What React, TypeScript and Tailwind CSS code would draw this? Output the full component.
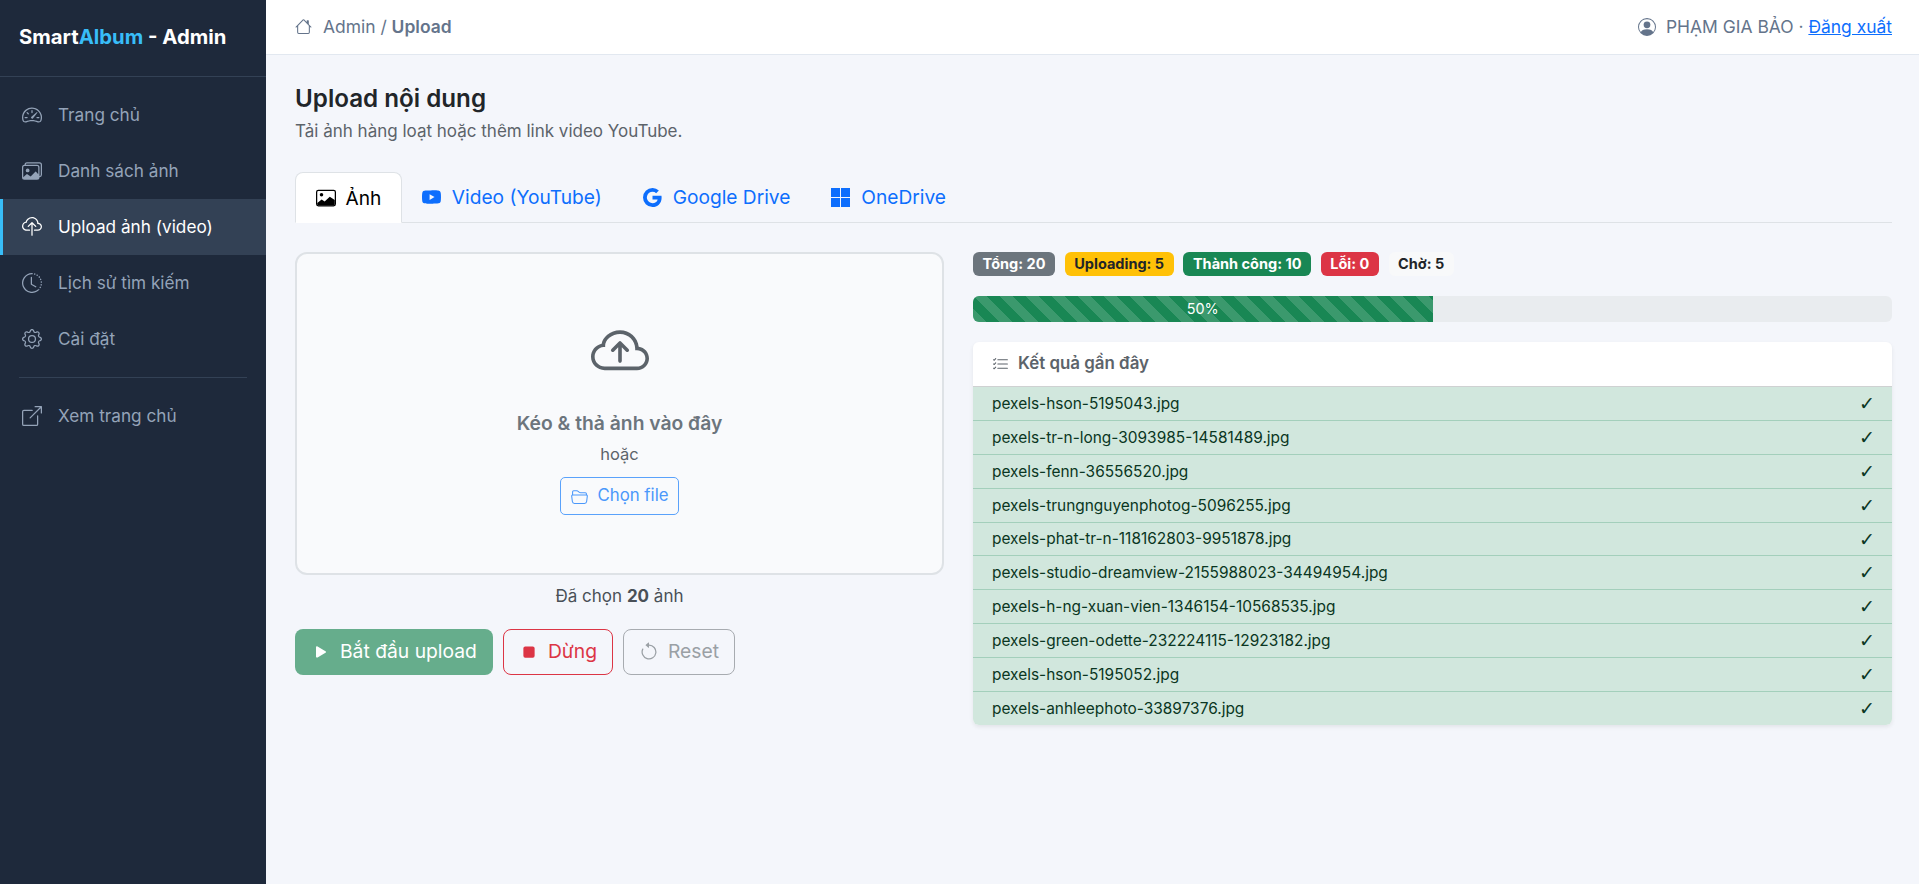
import React from 'react';
import {
  BsArrowCounterclockwise,
  BsBoxArrowUpRight,
  BsClockHistory,
  BsCloudArrowUp,
  BsCloudUpload,
  BsFolder2Open,
  BsGear,
  BsGoogle,
  BsHouse,
  BsImages,
  BsListCheck,
  BsPersonCircle,
  BsPlayFill,
  BsSpeedometer2,
  BsStopFill,
  BsYoutube,
} from 'react-icons/bs';

const files = [
  'pexels-hson-5195043.jpg',
  'pexels-tr-n-long-3093985-14581489.jpg',
  'pexels-fenn-36556520.jpg',
  'pexels-trungnguyenphotog-5096255.jpg',
  'pexels-phat-tr-n-118162803-9951878.jpg',
  'pexels-studio-dreamview-2155988023-34494954.jpg',
  'pexels-h-ng-xuan-vien-1346154-10568535.jpg',
  'pexels-green-odette-232224115-12923182.jpg',
  'pexels-hson-5195052.jpg',
  'pexels-anhleephoto-33897376.jpg',
];

const PhotoIcon = () => (
  <svg viewBox="0 0 16 16" className="size-5" fill="currentColor">
    <rect x="0.5" y="1.8" width="15" height="12.4" rx="1.4" fill="none" stroke="currentColor" />
    <circle cx="4.4" cy="5.4" r="1.4" />
    <path d="M1 12 4.5 9.2l2.4 1.5L11 7l4 2.6V13a1 1 0 0 1-1 1H2a1 1 0 0 1-1-1z" />
  </svg>
);

const WindowsIcon = () => (
  <svg viewBox="0 0 19 19" className="size-[19px]" fill="currentColor">
    <rect x="0" y="0" width="9" height="9" />
    <rect x="10" y="0" width="9" height="9" />
    <rect x="0" y="10" width="9" height="9" />
    <rect x="10" y="10" width="9" height="9" />
  </svg>
);

const NavItem = ({ icon, label, active }: { icon: React.ReactNode; label: string; active?: boolean }) => (
  <a
    className={
      active
        ? 'flex h-14 items-center gap-[16px] border-l-[3px] border-[#38bdf8] bg-[#334155] pl-[19px] text-white'
        : 'flex h-14 items-center gap-[16px] border-l-[3px] border-transparent pl-[19px] text-[#94a3b8]'
    }
  >
    <span className="text-[20px]">{icon}</span>
    <span>{label}</span>
  </a>
);

const Sidebar = () => (
  <aside className="flex w-[266px] shrink-0 flex-col bg-[#1e293b] text-[17.2px]">
    <div className="flex h-[77px] items-center border-b border-[#334155] pb-[2px] pl-[19px] text-[20.3px] font-bold text-white">
      Smart<span className="text-[#38bdf8]">Album</span>&nbsp;- Admin
    </div>
    <nav className="pt-[10px]">
      <NavItem icon={<BsSpeedometer2 />} label="Trang chủ" />
      <NavItem icon={<BsImages />} label="Danh sách ảnh" />
      <NavItem icon={<BsCloudUpload />} label="Upload ảnh (video)" active />
      <NavItem icon={<BsClockHistory />} label="Lịch sử tìm kiếm" />
      <NavItem icon={<BsGear />} label="Cài đặt" />
      <div className="mx-[19px] my-[10px] border-t border-[#334155]" />
      <NavItem icon={<BsBoxArrowUpRight />} label="Xem trang chủ" />
    </nav>
  </aside>
);

const Topbar = () => (
  <header className="flex h-[55px] items-center justify-between border-b border-[#e2e8f0] bg-white pl-[29px] pr-[27px] text-[17.45px] text-[#64748b]">
    <div className="flex items-center">
      <BsHouse className="mr-[11px] text-[17px]" />
      <span>Admin /&nbsp;</span>
      <strong className="font-semibold">Upload</strong>
    </div>
    <div className="flex items-center">
      <BsPersonCircle className="mr-[10px] text-[18px]" />
      PHẠM GIA BẢO ·&nbsp;<a className="text-[#0d6efd] underline">Đăng xuất</a>
    </div>
  </header>
);

const Tabs = () => (
  <div className="mt-[29px] flex h-[51px] items-end border-b border-[#dee2e6] text-[19.15px]">
    <div className="mb-[-1px] flex h-[51px] items-center gap-[10px] rounded-t-[8px] border border-[#dee2e6] border-b-white bg-white px-[19.5px] pt-[1px] text-black">
      <PhotoIcon />
      Ảnh
    </div>
    <div className="flex h-[50px] items-center gap-[11px] pl-[20px] pr-[21px] pt-[1px] text-[#0d6efd]">
      <BsYoutube className="text-[19px]" />
      Video (YouTube)
    </div>
    <div className="flex h-[50px] items-center gap-[11px] px-[20px] pt-[1px] text-[#0d6efd]">
      <BsGoogle className="text-[19px]" />
      Google Drive
    </div>
    <div className="flex h-[50px] items-center gap-[11px] px-[21px] pt-[1px] text-[#0d6efd]">
      <WindowsIcon />
      OneDrive
    </div>
  </div>
);

const UploadPane = () => (
  <div className="w-[649px] shrink-0">
    <div className="flex h-[323px] flex-col items-center rounded-[12px] border-2 border-[#dee2e6] bg-[#f9fafc] pt-[69px]">
      <BsCloudArrowUp className="text-[58px] text-[#5c636a]" />
      <div className="mt-[30px] text-[19.3px] font-semibold leading-[25px] text-[#6c757d]">Kéo &amp; thả ảnh vào đây</div>
      <div className="mt-[6px] text-[16.5px] leading-[24px] text-[#5c636a]">hoặc</div>
      <button className="mt-[11px] flex h-[38px] items-center gap-[9px] rounded-[5px] border border-[#5aa2fb] pl-[10px] pr-[9px] text-[16.8px] text-[#4b98fb]">
        <BsFolder2Open className="text-[17px]" />
        Chọn file
      </button>
    </div>
    <div className="mt-[9px] text-center text-[17px] leading-[25px] text-[#495057]">
      Đã chọn <strong className="font-bold">20</strong> ảnh
    </div>
    <div className="mt-[20px] flex gap-[10px] text-[19.3px]">
      <button className="flex h-[46px] items-center gap-[9px] rounded-[8px] bg-[#66ad8c] px-[16px] pb-[1px] text-white">
        <BsPlayFill className="text-[20px]" />
        Bắt đầu upload
      </button>
      <button className="flex h-[46px] items-center gap-[9px] rounded-[8px] border border-[#dc3545] px-[15px] pb-[1px] text-[#dc3545]">
        <BsStopFill className="text-[20px]" />
        Dừng
      </button>
      <button className="flex h-[46px] items-center gap-[9px] rounded-[8px] border border-[#a7abb0] px-[15px] pb-[1px] text-[#9aa0a5]">
        <BsArrowCounterclockwise className="text-[20px]" />
        Reset
      </button>
    </div>
  </div>
);

const Badge = ({ className, children }: { className: string; children: React.ReactNode }) => (
  <span className={'flex h-6 items-center rounded-[6px] px-[9.6px] text-[14.5px] font-bold ' + className}>{children}</span>
);

const ResultPane = () => (
  <div className="min-w-0 flex-1">
    <div className="flex gap-[9.6px]">
      <Badge className="bg-[#6c757d] text-white">Tổng: 20</Badge>
      <Badge className="bg-[#ffc107] text-[#212529]">Uploading: 5</Badge>
      <Badge className="bg-[#198754] text-white">Thành công: 10</Badge>
      <Badge className="bg-[#dc3545] text-white">Lỗi: 0</Badge>
      <Badge className="bg-[#f8f9fa] text-[#212529]">Chờ: 5</Badge>
    </div>
    <div className="mt-5 h-[26px] overflow-hidden rounded-[6px] bg-[#e9ecef]">
      <div className="flex h-full w-1/2 items-center justify-center bg-[#198754] bg-[linear-gradient(45deg,rgba(255,255,255,.15)_25%,transparent_25%,transparent_50%,rgba(255,255,255,.15)_50%,rgba(255,255,255,.15)_75%,transparent_75%,transparent)] bg-[length:26px_26px] text-[14.4px] text-white">
        50%
      </div>
    </div>
    <div className="mt-5 overflow-hidden rounded-[6px] bg-white shadow-[0_2px_4px_rgba(0,0,0,0.075)]">
      <div className="flex h-[45px] items-center gap-[9px] border-b border-[#cfd1d2] pl-[19px] text-[16.9px] font-semibold text-[#5c636a]">
        <BsListCheck className="text-[17px]" />
        Kết quả gần đây
      </div>
      {files.map((name, i) => (
        <div
          key={name}
          className={
            i < files.length - 1
              ? 'flex h-[33.9px] items-center justify-between border-b border-[#a3cfbb] bg-[#d1e7dd] pl-[19px] pr-[17px] text-[15.45px] text-[#0a3622]'
              : 'flex h-[33px] items-center justify-between bg-[#d1e7dd] pl-[19px] pr-[17px] text-[15.45px] text-[#0a3622]'
          }
        >
          <span>{name}</span>
          <span className="font-['DejaVu_Sans',sans-serif] text-[19px] leading-none">✓</span>
        </div>
      ))}
    </div>
  </div>
);

export default function App() {
  return (
    <div className="flex h-[884px] overflow-hidden bg-[#f4f6fb] font-['Inter','DejaVu_Sans',sans-serif] text-[16px] text-[#212529]">
      <Sidebar />
      <div className="min-w-0 flex-1">
        <Topbar />
        <main className="pl-[29px] pr-[27px] pt-[29px]">
          <h1 className="text-[24.2px] font-semibold leading-[30px] text-[#212529]">Upload nội dung</h1>
          <p className="mt-[5px] text-[17px] leading-[24px] text-[#5c636a]">Tải ảnh hàng loạt hoặc thêm link video YouTube.</p>
          <Tabs />
          <div className="mt-[29px] flex gap-[29px]">
            <UploadPane />
            <ResultPane />
          </div>
        </main>
      </div>
    </div>
  );
}
